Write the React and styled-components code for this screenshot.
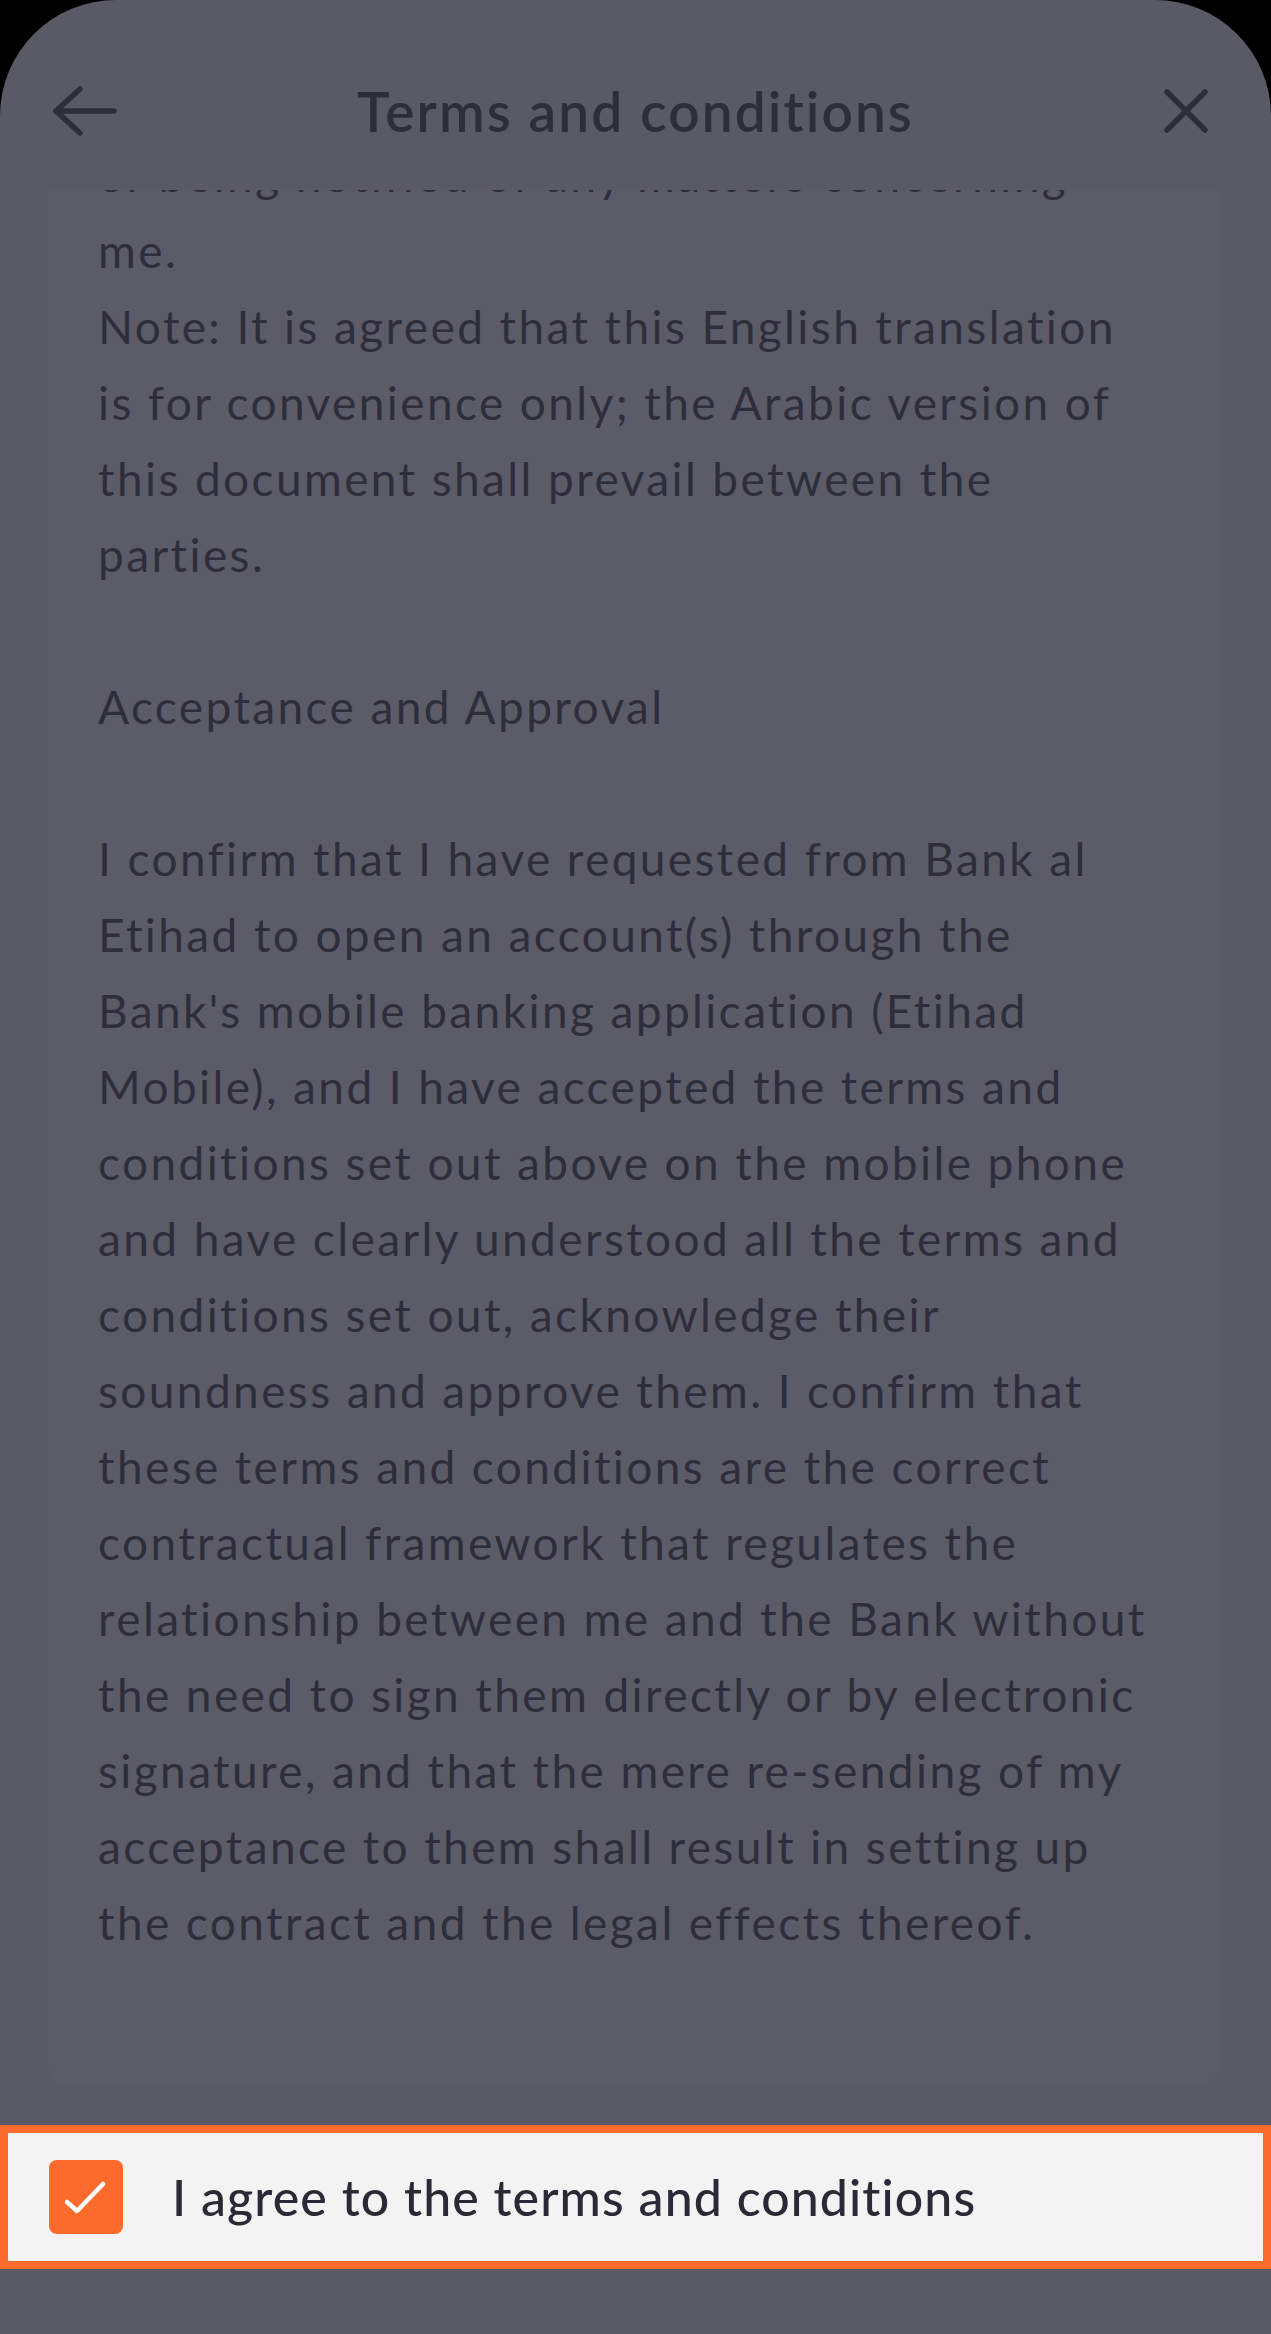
import React, { useLayoutEffect, useRef } from "react";
import styled, { createGlobalStyle } from "styled-components";

const GlobalStyle = createGlobalStyle`
  html, body {
    margin: 0;
    padding: 0;
    background: #000;
  }
  * {
    box-sizing: border-box;
  }
`;

const Screen = styled.div`
  height: 100vh;
  display: flex;
  flex-direction: column;
  background: #5a5a66;
  border-radius: 116px 116px 0 0;
  overflow: hidden;
  font-family: Lato, "Liberation Sans", sans-serif;
  color: #2e2e3b;
`;

const Header = styled.header`
  height: 190px;
  flex-shrink: 0;
  padding: 32px 45px 0;
  display: grid;
  grid-template-columns: 1fr auto 1fr;
  align-items: center;
`;

const IconButton = styled.button`
  width: 80px;
  height: 80px;
  padding: 0;
  border: none;
  background: none;
  display: flex;
  align-items: center;
  justify-content: center;
  justify-self: ${(p) => (p.$end ? "end" : "start")};
  color: #2e2e3b;
  cursor: pointer;
`;

const Title = styled.h1`
  margin: 0;
  font-size: 55px;
  font-weight: 600;
  letter-spacing: 2.1px;
  white-space: nowrap;
`;

const TermsPanel = styled.div`
  position: relative;
  flex: 1;
  margin: 0 51px 0 48px;
  background: #5c5c68;
  border-radius: 0 0 22px 22px;
  overflow-y: auto;
  scrollbar-width: none;
  &::-webkit-scrollbar {
    display: none;
  }
`;

const TermsBody = styled.div`
  padding: 40px 0 220px 50px;
  font-size: 46px;
  line-height: 76px;
  letter-spacing: 2.4px;
`;

const Paragraph = styled.p`
  margin: 0 0 76px;
`;

const Line = styled.span`
  display: block;
  white-space: nowrap;
`;

const AgreeRow = styled.label`
  flex-shrink: 0;
  height: 144px;
  margin-top: 39px;
  display: flex;
  align-items: center;
  gap: 49px;
  padding-left: 41px;
  background: #f3f3f4;
  border: 8px solid #fc6a2c;
  cursor: pointer;
`;

const Checkbox = styled.span`
  width: 74px;
  height: 74px;
  flex-shrink: 0;
  border-radius: 8px;
  background: ${(p) => (p.$checked ? "#fc6a2c" : "transparent")};
  border: ${(p) => (p.$checked ? "none" : "3px solid #2e2e3b")};
  display: flex;
`;

const AgreeLabel = styled.span`
  font-size: 50px;
  font-weight: 500;
  color: #2a2a36;
  letter-spacing: 1.1px;
  white-space: nowrap;
`;

const BottomSpace = styled.div`
  height: 65px;
  flex-shrink: 0;
`;

const BackIcon = () => (
  <svg width="64" height="50" viewBox="0 0 64 50" fill="none" stroke="currentColor" strokeWidth="5.5" strokeLinecap="round" strokeLinejoin="round">
    <path d="M61 25H3" />
    <path d="M27 3L3 25L27 47" />
  </svg>
);

const CloseIcon = () => (
  <svg width="46" height="46" viewBox="0 0 46 46" fill="none" stroke="currentColor" strokeWidth="5.5" strokeLinecap="round">
    <path d="M4 4L42 42" />
    <path d="M42 4L4 42" />
  </svg>
);

const CheckIcon = () => (
  <svg width="74" height="74" viewBox="0 0 74 74" fill="none" stroke="#fff" strokeWidth="4.5" strokeLinecap="round" strokeLinejoin="round">
    <path d="M18 42L28 51L54 24" />
  </svg>
);

const terms = [
  [
    "I further consent to the Bank contacting me by",
    "telephone, text messages or e-mail for the purpose",
    "or being notified of any matters concerning",
    "me.",
    "Note: It is agreed that this English translation",
    "is for convenience only; the Arabic version of",
    "this document shall prevail between the",
    "parties.",
  ],
  ["Acceptance and Approval"],
  [
    "I confirm that I have requested from Bank al",
    "Etihad to open an account(s) through the",
    "Bank's mobile banking application (Etihad",
    "Mobile), and I have accepted the terms and",
    "conditions set out above on the mobile phone",
    "and have clearly understood all the terms and",
    "conditions set out, acknowledge their",
    "soundness and approve them. I confirm that",
    "these terms and conditions are the correct",
    "contractual framework that regulates the",
    "relationship between me and the Bank without",
    "the need to sign them directly or by electronic",
    "signature, and that the mere re-sending of my",
    "acceptance to them shall result in setting up",
    "the contract and the legal effects thereof.",
  ],
];

const App = () => {
  const panelRef = useRef(null);
  const anchorRef = useRef(null);

  // the sheet is shown scrolled down to the end of the terms
  useLayoutEffect(() => {
    if (panelRef.current && anchorRef.current) {
      panelRef.current.scrollTop = anchorRef.current.offsetTop - 23;
    }
  }, []);

  return (
    <>
      <GlobalStyle />
      <Screen>
        <Header>
          <IconButton aria-label="Back">
            <BackIcon />
          </IconButton>
          <Title>Terms and conditions</Title>
          <IconButton $end aria-label="Close">
            <CloseIcon />
          </IconButton>
        </Header>
        <TermsPanel ref={panelRef}>
          <TermsBody>
            {terms.map((para, i) => (
              <Paragraph key={i}>
                {para.map((line, j) => (
                  <Line key={j} ref={line === "me." ? anchorRef : null}>
                    {line}
                  </Line>
                ))}
              </Paragraph>
            ))}
          </TermsBody>
        </TermsPanel>
        <AgreeRow>
          <Checkbox $checked>
            <CheckIcon />
          </Checkbox>
          <AgreeLabel>I agree to the terms and conditions</AgreeLabel>
        </AgreeRow>
        <BottomSpace />
      </Screen>
    </>
  );
};

export default App;
